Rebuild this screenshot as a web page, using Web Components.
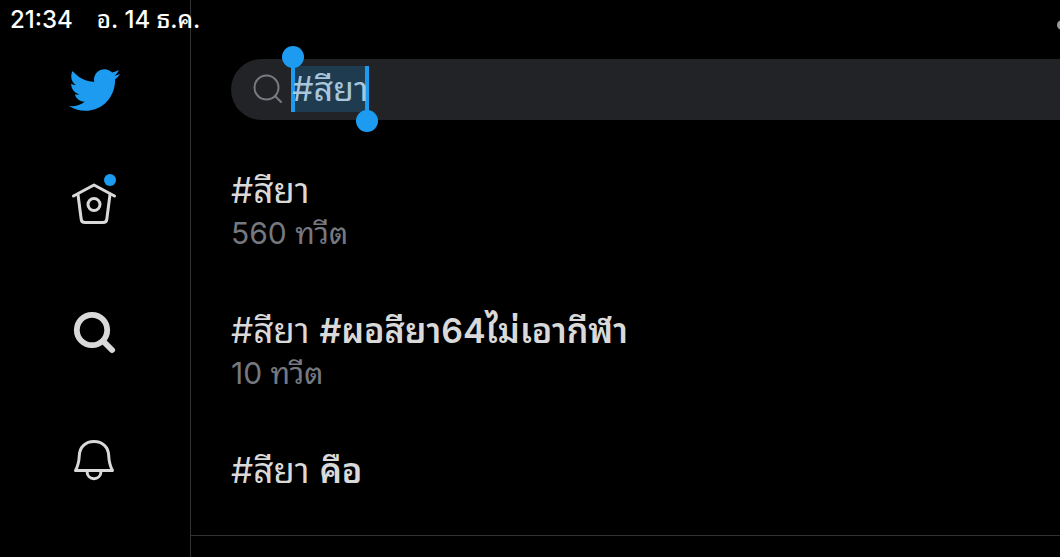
<!DOCTYPE html>
<html lang="th">
<head>
<meta charset="utf-8">
<meta name="viewport" content="width=device-width, initial-scale=1">
<title>ค้นหา</title>
<style>
  html, body { margin: 0; min-height: 100%; background: #000; }
  body {
    color: #d9d9d9;
    font-family: Inter, "Noto Sans Thai Looped", Loma, Garuda, Umpush, Laksaman, Waree, "Droid Sans Thai", "Noto Sans Thai", "Noto Sans", sans-serif;
    overflow-x: hidden;
  }
</style>
</head>
<body>
<search-app></search-app>
<script>
const define = (name, html) => customElements.define(name, class extends HTMLElement {
  constructor() {
    super();
    const t = document.createElement('template');
    t.innerHTML = html;
    this.attachShadow({ mode: 'open' }).append(t.content.cloneNode(true));
  }
});

define('status-bar', `
  <style>
    :host { display: flex; gap: 24px; align-items: center; height: 40px; padding-left: 10px; overflow: hidden;
      color: #fff; font-size: 24px; line-height: 40px; font-weight: 500; white-space: nowrap; }
    i { margin-left: auto; margin-right: -7px; margin-top: 10px; width: 10px; height: 10px; border-radius: 50%; background: #9a9a9a; }
  </style>
  <slot></slot><i></i>`);

define('nav-item', `
  <style>
    :host { display: block; }
    a { display: flex; height: 128px; align-items: center; justify-content: center; color: inherit; }
  </style>
  <a href="#"><slot></slot></a>`);

define('side-bar', `
  <style>
    :host { display: flex; flex-direction: column; box-sizing: border-box; width: 191px; padding-top: 40px;
      padding-right: 2px; border-right: 1px solid #2f3336; }
    .logo { display: flex; height: 100px; align-items: center; justify-content: center; }
    svg { display: block; overflow: visible; }
  </style>
  <a class="logo" href="#" aria-label="Twitter">
    <svg width="54" height="54" viewBox="0 0 24 24" fill="#1d9bf0"><path d="M23.643 4.937c-.835.37-1.732.62-2.675.733.962-.576 1.7-1.49 2.048-2.578-.9.534-1.897.922-2.958 1.13-.85-.904-2.06-1.47-3.4-1.47-2.572 0-4.658 2.086-4.658 4.66 0 .364.042.718.12 1.06-3.873-.195-7.304-2.05-9.602-4.868-.4.69-.63 1.49-.63 2.342 0 1.616.823 3.043 2.072 3.878-.764-.025-1.482-.234-2.11-.583v.06c0 2.257 1.605 4.14 3.737 4.568-.392.106-.803.162-1.227.162-.3 0-.593-.028-.877-.082.593 1.85 2.313 3.198 4.352 3.234-1.595 1.25-3.604 1.995-5.786 1.995-.376 0-.747-.022-1.112-.065 2.062 1.323 4.51 2.093 7.14 2.093 8.57 0 13.255-7.098 13.255-13.254 0-.2-.005-.402-.014-.602.91-.658 1.7-1.477 2.323-2.41z"/></svg>
  </a>
  <nav>
    <nav-item><svg width="48" height="52" viewBox="0 0 48 52" fill="none" stroke="#d9d9d9" stroke-width="3" stroke-linecap="round" stroke-linejoin="round" role="img" aria-label="หน้าแรก">
      <path d="M3.500 18 L24 7 L44.500 18"/><path d="M8 16.500 L11.200 41.200 Q11.600 44.500 15 44.500 H33 Q36.400 44.500 36.800 41.200 L40 16.500"/><circle cx="24" cy="26.500" r="6"/>
      <circle cx="40" cy="2" r="6" fill="#1d9bf0" stroke="none"/></svg></nav-item>
    <nav-item><svg width="48" height="48" viewBox="0 0 48 48" fill="none" stroke="#d9d9d9" role="img" aria-label="ค้นหา">
      <circle cx="22" cy="22" r="15.200" stroke-width="5.800"/><path d="M34 34 L42 42" stroke-width="6" stroke-linecap="round"/></svg></nav-item>
    <nav-item><svg width="48" height="48" viewBox="0 0 48 48" fill="none" stroke="#d9d9d9" stroke-width="3" stroke-linejoin="round" role="img" aria-label="การแจ้งเตือน">
      <path d="M5.500 34.500 C8 30 9 26 9.300 19.500 C9.600 11 15.500 5.500 24 5.500 C32.500 5.500 38.400 11 38.700 19.500 C39 26 40 30 42.500 34.500 Z"/><path d="M17 35 C17 45.300 31 45.300 31 35"/></svg></nav-item>
  </nav>`);

define('search-box', `
  <style>
    :host { display: block; padding: 59px 0 20px 40px; }
    label { display: flex; align-items: center; box-sizing: border-box; height: 61px; padding: 0 0 1px 22px; gap: 9px;
      background: #222327; border-radius: 31px 0 0 31px; }
    svg { display: block; flex: none; }
    .selection { position: relative; display: flex; box-sizing: border-box; height: 46px;
      background: #1f3b50; border: solid #1d9bf0; border-width: 0 4px; }
    .selection::before, .selection::after { content: ""; position: absolute; width: 22px; height: 22px;
      border-radius: 50%; background: #1d9bf0; }
    .selection::before { left: -13px; top: -20px; }
    .selection::after { right: -13px; bottom: -20px; }
    input { field-sizing: content; margin: 0 -3px; padding: 0; border: 0; outline: 0; background: none;
      font: inherit; font-size: 34px; line-height: 46px; color: #a9c6dc; }
  </style>
  <label>
    <svg width="29" height="30" viewBox="0 0 29 30" fill="none" stroke="#797b80" stroke-width="2" stroke-linecap="round" aria-hidden="true"><circle cx="13.500" cy="13.500" r="12"/><path d="M22.500 22.500 L28 28"/></svg>
    <span class="selection"><input type="text" value="#สียา" aria-label="ค้นหา"></span>
  </label>`);

define('search-result', `
  <style>
    :host { display: block; }
    a { display: block; box-sizing: border-box; height: 140px; padding: 28px 40px; color: inherit; text-decoration: none; }
    .title { display: block; height: 44px; font-size: 35px; line-height: 44px; }
    ::slotted(b) { font-size: 34px; font-weight: 600; }
    .count { display: block; height: 42px; font-size: 30px; line-height: 42px; color: #75787f; }
  </style>
  <a href="#"><span class="title"><slot></slot></span><span class="count"><slot name="count"></slot></span></a>`);

define('search-app', `
  <style>
    :host { display: flex; position: relative; min-height: 100vh; overflow: hidden; }
    status-bar { position: absolute; top: 0; left: 0; right: 0; }
    side-bar { flex: none; }
    main { flex: 1; min-width: 0; }
    section { height: 395px; border-bottom: 1px solid #2f3336; }
  </style>
  <side-bar></side-bar>
  <main>
    <search-box></search-box>
    <section>
      <search-result>#สียา<span slot="count">560 ทวีต</span></search-result>
      <search-result>#สียา <b>#ผอสียา64ไม่เอากีฬา</b><span slot="count">10 ทวีต</span></search-result>
      <search-result>#สียา <b>คือ</b></search-result>
    </section>
  </main>
  <status-bar><span>21:34</span><span>อ. 14 ธ.ค.</span></status-bar>`);
</script>
</body>
</html>
